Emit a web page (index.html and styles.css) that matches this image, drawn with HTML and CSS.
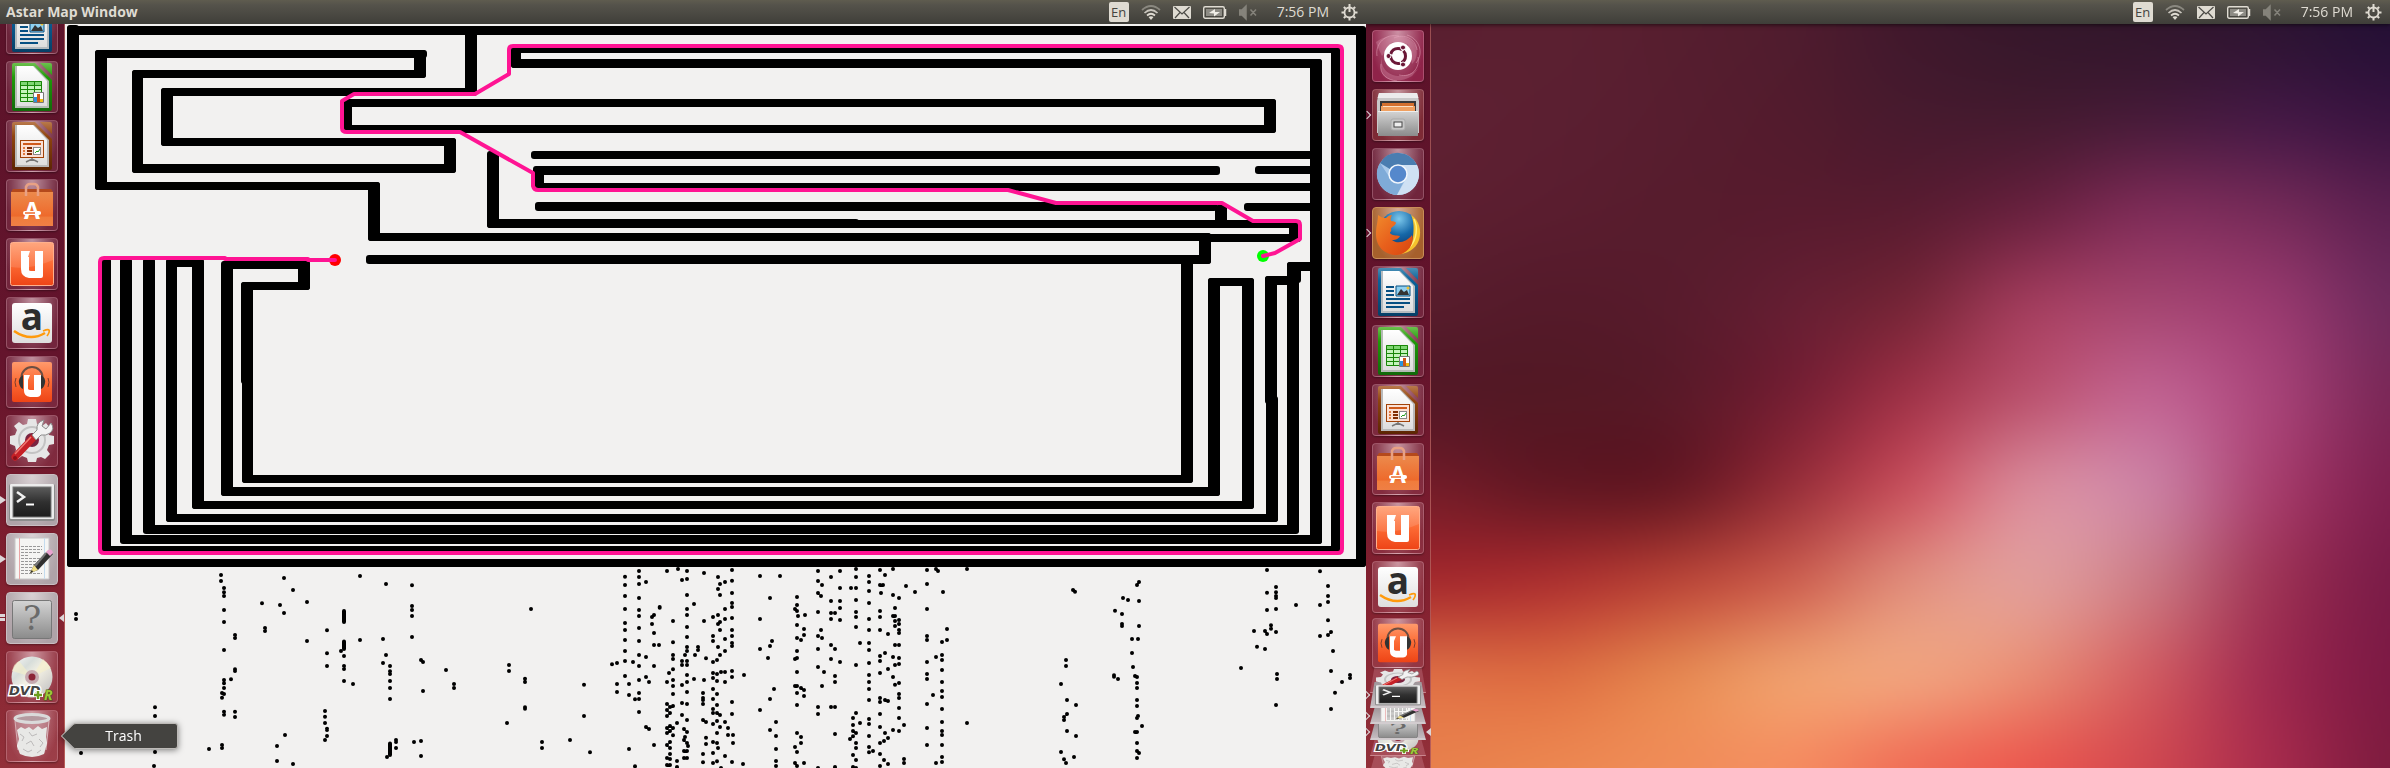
FILE: index.html
```html
<!DOCTYPE html>
<html lang="en">
<head>
<meta charset="utf-8">
<title>Astar Map Window</title>
<link rel="stylesheet" href="styles.css">
</head>
<body>
<svg class="defs" width="0" height="0" aria-hidden="true">
  <defs>
    <linearGradient id="paper" x1="0" y1="0" x2="0" y2="1"><stop offset="0" stop-color="#fff"/><stop offset="1" stop-color="#dedede"/></linearGradient>
    <linearGradient id="blue" x1="0" y1="0" x2="0" y2="1"><stop offset="0" stop-color="#4a8fb5"/><stop offset=".25" stop-color="#0b639c"/><stop offset="1" stop-color="#063f66"/></linearGradient>
    <linearGradient id="green" x1="0" y1="0" x2="0" y2="1"><stop offset="0" stop-color="#6cc04d"/><stop offset=".3" stop-color="#1f9a08"/><stop offset="1" stop-color="#11690a"/></linearGradient>
    <linearGradient id="brown" x1="0" y1="0" x2="0" y2="1"><stop offset="0" stop-color="#b9794b"/><stop offset=".3" stop-color="#8f4410"/><stop offset="1" stop-color="#5c2503"/></linearGradient>
    <linearGradient id="orange" x1="0" y1="0" x2="0" y2="1"><stop offset="0" stop-color="#ff9a6c"/><stop offset=".5" stop-color="#fc6a34"/><stop offset="1" stop-color="#ee4416"/></linearGradient>
    <linearGradient id="bag" x1="0" y1="0" x2="0" y2="1"><stop offset="0" stop-color="#ec8a4c"/><stop offset=".7" stop-color="#ee6a2c"/><stop offset=".75" stop-color="#f07c3c"/><stop offset="1" stop-color="#ef7f45"/></linearGradient>
    <linearGradient id="steel" x1="0" y1="0" x2="0" y2="1"><stop offset="0" stop-color="#d4d4d4"/><stop offset="1" stop-color="#8b8b8b"/></linearGradient>
    <linearGradient id="screenglass" x1="0" y1="0" x2="0" y2="1"><stop offset="0" stop-color="#5c5c5c"/><stop offset=".5" stop-color="#303030"/><stop offset="1" stop-color="#1c1c1c"/></linearGradient>
    <linearGradient id="disc" x1="0" y1="0" x2="1" y2="1"><stop offset="0" stop-color="#f8f8f8"/><stop offset=".3" stop-color="#d7ddda"/><stop offset=".5" stop-color="#f4f1e4"/><stop offset="1" stop-color="#b9b9bd"/></linearGradient>
    <radialGradient id="globe" cx=".5" cy=".2" r=".8"><stop offset="0" stop-color="#7cc8ec"/><stop offset=".5" stop-color="#1668a8"/><stop offset="1" stop-color="#0c2f66"/></radialGradient>
    <linearGradient id="fox" x1="0" y1="0" x2="1" y2="1"><stop offset="0" stop-color="#f08a2c"/><stop offset=".5" stop-color="#e8601c"/><stop offset="1" stop-color="#d8450e"/></linearGradient>
  </defs>

  <symbol id="i-dash" viewBox="0 0 52 52">
    <g fill="none" stroke="#e8a8bd" stroke-opacity=".5">
      <path d="M5 26C3 13 14 3 27 6M45 20C44 9 32 3 22 8M44 33C53 22 46 8 35 5M27 45C40 48 48 38 46 27M9 34C7 45 16 50 25 51"/>
    </g>
    <path d="M4 12C14 4 36 2 44 16 46 26 44 30 40 34L36 14 20 12 10 26C7 20 5 16 4 12zM10 26C8 38 16 46 28 46 38 46 46 40 50 34L40 46C30 52 18 52 12 46 8 40 8 34 10 26z" fill="#e6a3b9" opacity=".3"/>
    <circle cx="26" cy="26" r="14" fill="#fff"/>
    <circle cx="26" cy="26" r="7.500" fill="none" stroke="#6b1837" stroke-width="3" stroke-dasharray="14 1.700" stroke-dashoffset="6"/>
    <g fill="#6b1837" stroke="#fff" stroke-width="1"><circle cx="16.500" cy="26" r="2.500"/><circle cx="31" cy="17.500" r="2.500"/><circle cx="31" cy="34.500" r="2.500"/></g>
  </symbol>

  <symbol id="i-files" viewBox="0 0 52 52">
    <path d="M7 4H45L47 12V44H5V12z" fill="#c9c9c9"/><path d="M7 4H45L46.500 9H5.500z" fill="#ececec"/>
    <path d="M8 12H44V23H8z" fill="#383838"/><path d="M10 14H42V22H10z" fill="#d4702e"/><path d="M9 17H43V22H9z" fill="#f0a060"/><path d="M11 17.500H41" stroke="#fbe0c4"/>
    <path d="M6 22H46V47H6z" fill="url(#steel)"/><path d="M6 22.500H46" stroke="#eee"/>
    <rect x="19" y="30" width="14" height="11" rx="2" fill="#c7c7c7" stroke="#aaa"/><rect x="22" y="33" width="8" height="5" fill="#eee" stroke="#444"/>
  </symbol>

  <symbol id="i-chromium" viewBox="0 0 52 52">
    <circle cx="26" cy="26" r="21" fill="#a9c9ea"/>
    <path d="M26 26L8 15A21 21 0 0 1 45 17z" fill="#4a7db0"/>
    <path d="M8 15A21 21 0 0 0 25 47L33 31 18 30z" fill="#7fabd8"/>
    <path d="M45 17H27L34 31 25 47A21 21 0 0 0 45 17z" fill="#cfe1f4"/>
    <circle cx="26" cy="26" r="9" fill="#5588cc" stroke="#f1f6fc" stroke-width="1.500"/>
  </symbol>

  <symbol id="i-firefox" viewBox="0 0 52 52">
    <circle cx="27" cy="24" r="20" fill="url(#globe)"/>
    <path d="M39 8C47 13 50 23 47 33 43 44 32 48 24 47 34 45 40 38 41 30 42 22 42 14 39 8z" fill="#f6c22c"/>
    <path d="M42 12C46 20 45 32 38 40" fill="none" stroke="#fff07a" stroke-width="1.500"/>
    <path d="M6 8C9 10 10 11 14 11 16 9 18 8 20 8 19 10 18 12 19 14 22 14 24 15 24 16 23 19 19 20 19 22 20 24 18 25 18 26 20 29 24 28 28 29 26 33 22 33 20 33 26 38 36 34 40 28 43 36 36 47 25 48 13 48 4 40 4 27 4 19 6 15 6 8z" fill="url(#fox)"/>
  </symbol>

  <symbol id="i-writer" viewBox="0 0 52 52">
    <path d="M8 2H29L46 19V48Q46 50 44 50H8Q6 50 6 48V4Q6 2 8 2zM34 2H44Q46 2 46 4V14z" fill="url(#blue)"/>
    <path d="M9 5H28L43 20V47H9z" fill="#b5bbbf"/><path d="M9 5H27L41 20V45H11V5z" fill="url(#paper)"/>
    <path d="M14 21h8M14 25h8M14 29h8M14 33h24M14 37h24M14 41h18" stroke="#075083" stroke-width="2"/>
    <path d="M24 20H38V30H24z" fill="#8fd0f0" stroke="#075083"/><path d="M25 29L29 23 32 26 35 24 37 29z" fill="#333"/><circle cx="36" cy="22" r="1.500" fill="#f0c030"/>
  </symbol>

  <symbol id="i-calc" viewBox="0 0 52 52">
    <path d="M8 2H29L46 19V48Q46 50 44 50H8Q6 50 6 48V4Q6 2 8 2zM34 2H44Q46 2 46 4V14z" fill="url(#green)"/>
    <path d="M9 5H28L43 20V47H9z" fill="#b5bbb5"/><path d="M9 5H27L41 20V45H11V5z" fill="url(#paper)"/>
    <path d="M14 20H36V41H14z" fill="#c5f3bc"/><path d="M14 20H36V24H14z" fill="#7fd673"/>
    <path d="M14.500 20.500H35.500V40.500H14.500zM14 24.500H36M14 28.500H36M14 32.500H36M14 36.500H36M21.500 20V41M28.500 20V41" fill="none" stroke="#188508"/>
    <path d="M27.500 31.500H37.500V41.500H27.500z" fill="#fff" stroke="#777"/><path d="M28 36h3v5h-3z" fill="#2b94dc"/><path d="M31 33h3v8h-3z" fill="#cf5818"/><path d="M34 38h3v3h-3z" fill="#eebc10"/>
  </symbol>

  <symbol id="i-impress" viewBox="0 0 52 52">
    <path d="M8 2H29L46 19V48Q46 50 44 50H8Q6 50 6 48V4Q6 2 8 2zM34 2H44Q46 2 46 4V14z" fill="url(#brown)"/>
    <path d="M9 5H28L43 20V47H9z" fill="#b9b9b9"/><path d="M9 5H27L41 20V45H11V5z" fill="url(#paper)"/>
    <path d="M26 38V41M20 42L26 39 32 42" fill="none" stroke="#777" stroke-width="1.500"/>
    <rect x="14.500" y="20.500" width="23" height="17" fill="#fbe0d4" stroke="#a14208"/>
    <path d="M17 24H35" stroke="#cf5a1b" stroke-width="2"/><path d="M17 28h2M17 31h2M17 34h2" stroke="#e07a40" stroke-width="2"/><path d="M21 28h5M21 31h5M21 34h5" stroke="#802c04" stroke-width="2"/>
    <rect x="27.500" y="27.500" width="7" height="7" fill="#fff" stroke="#888"/><path d="M29 33l2-2 1 1 2-3" fill="none" stroke="#27a020"/>
  </symbol>

  <symbol id="i-software" viewBox="0 0 52 52">
    <path d="M5 13L7 10H45L47 13z" fill="#b4491c"/><path d="M5 13H47V47H5z" fill="url(#bag)"/>
    <path d="M20 17V8Q21 5 24 5H28Q31 5 32 8V17" fill="none" stroke="#e8a184" stroke-width="2.500"/>
    <text x="26" y="40" class="glyph-a">A</text>
    <rect x="17" y="32" width="18" height="4" rx="2" fill="#fff"/><path d="M19 34H29" stroke="#ee6a2c" stroke-width="1.500"/>
  </symbol>

  <symbol id="i-one" viewBox="0 0 52 52">
    <rect x="4.500" y="4.500" width="43" height="43" rx="2" fill="url(#orange)" stroke="#ffb08c"/>
    <path d="M5 5H47V22Q24 32 5 29z" fill="#fff" opacity=".13"/>
    <path d="M15 13H21L24 13 22 19H23V32Q23 33 25 33H29V13H37V38Q37 40 35 40H23Q15 39 15 31z" fill="#fff"/>
  </symbol>

  <symbol id="i-amazon" viewBox="0 0 52 52">
    <rect x="6" y="6" width="40" height="40" rx="3" fill="url(#paper)"/>
    <text x="26" y="33" class="glyph-amazon">a</text>
    <path d="M8 34Q24 45 39 36" fill="none" stroke="#ff9a0c" stroke-width="2.500"/><path d="M37 34Q42 32 43 33 44 35 41 39" fill="none" stroke="#ff9a0c" stroke-width="1.700"/>
  </symbol>

  <symbol id="i-music" viewBox="0 0 52 52">
    <rect x="6" y="6" width="40" height="40" rx="2" fill="url(#orange)"/>
    <path d="M15.500 24V21A10.500 10 0 0 1 36.500 21V24" fill="none" stroke="#6d4e42" stroke-width="2"/>
    <path d="M17 19Q12 22 13 27 14 32 17 33zM35 19Q40 22 39 27 38 32 35 33z" fill="#333"/>
    <path d="M10 22Q8 26 10 31M42 22Q44 26 42 31" fill="none" stroke="#7a3c2c"/>
    <path d="M18 19H24L22 24V33Q23 34 24 34H28V19H35V38Q34 41 31 41H24Q18 40 18 35z" fill="#fff"/>
  </symbol>

  <symbol id="i-settings" viewBox="0 0 52 52">
    <path d="M21 9L22 4H30L31 9L36 11 40 8 44 13 42 17 43 20 48 21V29L43 30 41 35 44 39 39 44 35 42 31 43 30 47H22L21 43 16 41 12 44 8 39 10 35 9 31 4 29V21L9 20 11 15 8 11 13 7 17 10z" fill="#e6e6e6"/>
    <circle cx="26" cy="25" r="13" fill="none" stroke="#c3c3c3" stroke-width="2"/><circle cx="26" cy="25" r="7" fill="#7a2440"/>
    <path d="M9 42L27 23" stroke="#c62026" stroke-width="7" stroke-linecap="round"/><path d="M9 39L25 22" stroke="#ee7a72" stroke-width="1.500"/>
    <path d="M26 20L31 15Q30 7 38 5L36 11 40 14 45 8Q49 14 44 18 40 21 35 20L30 25z" fill="#f2f2f2" stroke="#8e8e8e"/>
    <circle cx="9" cy="43" r="2" fill="#8d1018"/>
  </symbol>

  <symbol id="i-terminal" viewBox="0 0 52 52">
    <rect x="3" y="10" width="46" height="37" rx="2" fill="#8c8c8c"/><rect x="4" y="10" width="44" height="35" rx="1" fill="#ececec"/>
    <rect x="7" y="13" width="38" height="30" fill="url(#screenglass)" stroke="#777"/>
    <path d="M11 18L18 23 11 28" fill="none" stroke="#f1f1f1" stroke-width="2.500"/><path d="M20 30.500H28" stroke="#fff" stroke-width="2"/>
  </symbol>

  <symbol id="i-editor" viewBox="0 0 52 52">
    <path d="M9 5H43V46H9z" fill="#f5f5f3" stroke="#c6c6c6"/><path d="M13.500 5V46" stroke="#e9a5a5"/><path d="M38.500 5V46" stroke="#c4dcee"/>
    <path d="M15 13.500H36M15 16.500H36M15 19.500H34M15 22.500H22M15 25.500H36M15 28.500H33M15 31.500H36M15 34.500H30M15 37.500H26M15 40.500H36" stroke="#999" stroke-dasharray="3 1"/>
    <path d="M43 17L47 21 32 37 24 40 28 32z" fill="#2f2f2f"/><path d="M40 20L29 33" stroke="#777" stroke-width="2"/>
    <path d="M42 17Q46 15 47 20L44 23 40 19z" fill="#eaa3d0"/><path d="M28 32L32 37 24 40z" fill="#f0de86"/><path d="M26 37L24 40 27 39z" fill="#222"/>
  </symbol>

  <symbol id="i-unknown" viewBox="0 0 52 52">
    <rect x="6.500" y="8.500" width="39" height="38" rx="2" fill="url(#steel)" stroke="#777"/>
    <text x="26" y="38" class="glyph-unknown">?</text>
  </symbol>

  <symbol id="i-dvd" viewBox="0 0 52 52">
    <circle cx="26" cy="26" r="20.500" fill="url(#disc)"/>
    <path d="M26 26L6 20Q8 12 13 10zM26 26L37 8Q42 12 45 17z" fill="#f6f0c8" opacity=".6"/>
    <circle cx="26" cy="26" r="7" fill="#c6a9b0"/><circle cx="26" cy="26" r="3.500" fill="#8c2437"/>
    <text x="3" y="44" class="glyph-dvd">DVD</text><text x="38" y="49" class="glyph-r">R</text>
    <path d="M32 39V49M27 44H37" stroke="#fff" stroke-width="4"/><path d="M32 40V48M28 44H36" stroke="#6b9c1c" stroke-width="2.500"/>
  </symbol>

  <symbol id="i-trash" viewBox="0 0 52 52">
    <path d="M9 9L13 43Q26 50 39 43L44 9z" fill="#c9a3aa" opacity=".4"/>
    <path d="M11 20L15 17 19 19 23 17 27 20 32 16 36 19 41 17 40 27 41 33 38 44Q26 50 14 44L11 36 13 29z" fill="#e8e8e6"/>
    <path d="M14 24L18 27 16 31M23 22L26 26 31 24M20 34L25 31 28 36M33 29L37 33 34 37M17 39L22 42 26 40M31 43L35 40" fill="none" stroke="#bcbaba"/>
    <ellipse cx="26" cy="8.500" rx="17" ry="4" fill="#b59aa0" stroke="#dadada" stroke-width="3"/>
    <path d="M9 11L12 40M43 11L40 40" stroke="#fff" stroke-opacity=".5"/>
  </symbol>

  <symbol id="p-wifi" viewBox="0 0 20 20">
    <g fill="none" stroke="#dfdbd2" stroke-width="1.700"><path d="M1 8Q10 0 19 8" opacity=".4"/><path d="M3.500 11Q10 5 16.500 11" opacity=".85"/><path d="M6 13.500Q10 10 14 13.500"/></g><path d="M10 18L7.500 15Q10 13.500 12.500 15z" fill="#dfdbd2"/>
  </symbol>
  <symbol id="p-mail" viewBox="0 0 18 20"><rect y="4" width="18" height="13" rx="1" fill="#dfdbd2"/><path d="M1.500 5L9 12 16.500 5M2 16L7 10.500M16 16L11 10.500" fill="none" stroke="#4c4b46" stroke-width="1.200"/></symbol>
  <symbol id="p-battery" viewBox="0 0 24 20"><rect x=".7" y="4.700" width="20.600" height="11.600" rx="1.500" fill="none" stroke="#dfdbd2" stroke-width="1.400"/><rect x="3" y="7" width="16" height="7" fill="#8d8b84"/><path d="M22.500 7V14" stroke="#dfdbd2" stroke-width="1.500"/><path d="M6 11L12 7 12 10 17 10 11 14.500 11 11.500z" fill="#f0ede6"/></symbol>
  <symbol id="p-sound" viewBox="0 0 20 20"><path d="M0 8H3L7 4V17L3 13H0zM11.500 7.500L17 13.500M17 7.500L11.500 13.500" fill="#85837b" stroke="#85837b" stroke-width="1.500"/></symbol>
  <symbol id="p-gear" viewBox="0 0 17 20"><circle cx="8.500" cy="10.500" r="5" fill="none" stroke="#dfdbd2" stroke-width="1.800"/><path d="M8.500 2V10M8.500 16V18.500M.5 10.500H3M14 10.500H16.500M2.800 5L4.500 6.600M14.200 5L12.500 6.600M2.800 16L4.500 14.400M14.200 16L12.500 14.400" stroke="#dfdbd2" stroke-width="2"/></symbol>
</svg>

<div class="desktop">
  <section class="screen screen-left">
    <header class="panel">
      <h1 class="title">Astar Map Window</h1>
      <div class="indicators">
        <button class="lang">En</button>
        <button class="ind" aria-label="Network"><svg width="20" height="20"><use href="#p-wifi"/></svg></button>
        <button class="ind" aria-label="Messages"><svg width="18" height="20"><use href="#p-mail"/></svg></button>
        <button class="ind" aria-label="Battery"><svg width="24" height="20"><use href="#p-battery"/></svg></button>
        <button class="ind" aria-label="Sound"><svg width="20" height="20"><use href="#p-sound"/></svg></button>
        <button class="clock">7:56 PM</button>
        <button class="ind" aria-label="System"><svg width="17" height="20"><use href="#p-gear"/></svg></button>
      </div>
    </header>
    <div class="workspace">
      <nav class="launcher launcher-end" aria-label="Launcher">
        <button class="tile" aria-label="Writer"><svg><use href="#i-writer"/></svg></button>
        <button class="tile" aria-label="Calc"><svg><use href="#i-calc"/></svg></button>
        <button class="tile" aria-label="Impress"><svg><use href="#i-impress"/></svg></button>
        <button class="tile" aria-label="Software Center"><svg><use href="#i-software"/></svg></button>
        <button class="tile" aria-label="Ubuntu One"><svg><use href="#i-one"/></svg></button>
        <button class="tile" aria-label="Amazon"><svg><use href="#i-amazon"/></svg></button>
        <button class="tile" aria-label="Ubuntu One Music"><svg><use href="#i-music"/></svg></button>
        <button class="tile" aria-label="System Settings"><svg><use href="#i-settings"/></svg></button>
        <button class="tile tile-open running" aria-label="Terminal"><svg><use href="#i-terminal"/></svg></button>
        <button class="tile tile-open running" aria-label="Text Editor"><svg><use href="#i-editor"/></svg></button>
        <button class="tile tile-open double active" aria-label="Astar"><svg><use href="#i-unknown"/></svg></button>
        <button class="tile" aria-label="DVD"><svg><use href="#i-dvd"/></svg></button>
        <button class="tile" aria-label="Trash"><svg><use href="#i-trash"/></svg>
          <span class="tooltip"><svg class="tooltip-shape" viewBox="0 0 116 26" preserveAspectRatio="none" aria-hidden="true"><path d="M.5 13L12 1.500Q13 .5 15 .5H113Q115.500 .5 115.500 3V23Q115.500 25.500 113 25.500H15Q13 25.500 12 24.500z"/></svg><span class="tooltip-text">Trash</span></span>
        </button>
      </nav>
      <main class="map">
        <svg class="map-svg" viewBox="65 24 1301 744" preserveAspectRatio="xMinYMin meet" role="img" aria-label="A star path map">
          <g id="walls"></g>
          <path id="dots" class="dots"/>
          <path class="bars" d="M344 611V622M344 641.500V649M390 743.500V755"/>
          <circle cx="335" cy="260" r="6" fill="#f00"/><circle cx="1263" cy="256" r="6" fill="#0f0"/>
          <path class="route" d="M335 260H308V259H225V258H104Q100 258 100 262V549Q100 553 104 553H1338Q1342 553 1342 549V50Q1342 46 1338 46H513Q509 46 509 50V74L475 94H354L342 101V128Q342 132 347 132H460L533 173V186Q534 190 538 190H1008L1056 203H1222L1253 221H1296Q1300 221 1300 225V239L1275 253 1263 256"/>
        </svg>
      </main>
    </div>
  </section>

  <section class="screen screen-right">
    <header class="panel">
      <div class="indicators">
        <button class="lang">En</button>
        <button class="ind" aria-label="Network"><svg width="20" height="20"><use href="#p-wifi"/></svg></button>
        <button class="ind" aria-label="Messages"><svg width="18" height="20"><use href="#p-mail"/></svg></button>
        <button class="ind" aria-label="Battery"><svg width="24" height="20"><use href="#p-battery"/></svg></button>
        <button class="ind" aria-label="Sound"><svg width="20" height="20"><use href="#p-sound"/></svg></button>
        <button class="clock">7:56 PM</button>
        <button class="ind" aria-label="System"><svg width="17" height="20"><use href="#p-gear"/></svg></button>
      </div>
    </header>
    <div class="workspace">
      <nav class="launcher" aria-label="Launcher">
        <button class="tile tile-dash" aria-label="Dash"><svg><use href="#i-dash"/></svg></button>
        <button class="tile tile-files elsewhere" aria-label="Files"><svg><use href="#i-files"/></svg></button>
        <button class="tile" aria-label="Chromium"><svg><use href="#i-chromium"/></svg></button>
        <button class="tile tile-firefox elsewhere" aria-label="Firefox"><svg><use href="#i-firefox"/></svg></button>
        <button class="tile" aria-label="Writer"><svg><use href="#i-writer"/></svg></button>
        <button class="tile" aria-label="Calc"><svg><use href="#i-calc"/></svg></button>
        <button class="tile" aria-label="Impress"><svg><use href="#i-impress"/></svg></button>
        <button class="tile" aria-label="Software Center"><svg><use href="#i-software"/></svg></button>
        <button class="tile" aria-label="Ubuntu One"><svg><use href="#i-one"/></svg></button>
        <button class="tile" aria-label="Amazon"><svg><use href="#i-amazon"/></svg></button>
        <button class="tile tile-short" aria-label="Ubuntu One Music"><svg viewBox="0 0 52 52" preserveAspectRatio="none"><use href="#i-music" width="52" height="52"/></svg></button>
        <div class="stack">
          <button class="fold fold-tall" aria-label="System Settings"><span class="leaf"></span><svg viewBox="0 0 52 52" preserveAspectRatio="none"><use href="#i-settings" width="52" height="52"/></svg></button>
          <button class="fold fold-tall overlap elsewhere" aria-label="Terminal"><span class="leaf leaf-open"></span><svg viewBox="0 4 52 48" preserveAspectRatio="none"><use href="#i-terminal" width="52" height="52"/></svg></button>
          <button class="fold elsewhere" aria-label="Text Editor"><span class="leaf leaf-open"></span><svg viewBox="0 14 52 38" preserveAspectRatio="none"><use href="#i-editor" width="52" height="52"/></svg></button>
          <button class="fold elsewhere active" aria-label="Astar"><span class="leaf leaf-open"></span><svg viewBox="0 16 52 36" preserveAspectRatio="none"><use href="#i-unknown" width="52" height="52"/></svg></button>
          <button class="fold" aria-label="DVD"><span class="leaf"></span><svg viewBox="0 28 52 24" preserveAspectRatio="none"><use href="#i-dvd" width="52" height="52"/></svg></button>
          <button class="fold" aria-label="Trash"><span class="leaf"></span><svg viewBox="0 14 52 38" preserveAspectRatio="none"><use href="#i-trash" width="52" height="52"/></svg></button>
        </div>
      </nav>
      <main class="wallpaper"><canvas id="wallpaper" class="wallpaper-canvas" width="480" height="372" aria-hidden="true"></canvas></main>
    </div>
  </section>
</div>
<script src="script.js"></script>
</body>
</html>
```

FILE: styles.css
```css
* { box-sizing: border-box; }
body { margin: 0; overflow: hidden; background: #5a1f30; font-family: "Open Sans", "Noto Sans", sans-serif; font-size: 14px; }
button { margin: 0; padding: 0; border: 0; background: none; color: inherit; font: inherit; }
.defs { position: absolute; }
.desktop { display: grid; grid-template-columns: 1366fr 1024fr; height: 100vh; }
.screen { display: flex; flex-direction: column; min-width: 0; min-height: 0; overflow: hidden; }

.panel { display: flex; align-items: center; flex: none; height: 24px; padding: 0 8px 0 6px; background: linear-gradient(#5f5c4f, #55534b 20%, #3f3e39); color: #dfdbd2; z-index: 10; }
.screen-right .panel { box-shadow: 0 1px 4px rgba(0, 0, 0, .6); }
.title { margin: 0; font-size: 14px; line-height: 24px; font-weight: 700; }
.indicators { display: flex; align-items: center; gap: 12px; margin-left: auto; }
.ind svg { display: block; }
.lang { width: 20px; height: 20px; border-radius: 2px; background: #dfdbd2; color: #45443f; font-size: 13px; line-height: 20px; }
.clock { margin-left: 6px; line-height: 24px; }

.workspace { display: flex; flex: 1; min-height: 0; }
.launcher { display: flex; flex: none; flex-direction: column; gap: 7px; width: 65px; min-height: 0; padding: 6px; background: linear-gradient(#5c132a, #64142c 45%, #82202f 75%, #923039); border-right: 1px solid rgba(230, 150, 130, .45); z-index: 5; }
.launcher-end { justify-content: flex-end; }
.tile { position: relative; flex: none; width: 52px; height: 52px; border-radius: 4px; border: 1px solid rgba(255, 210, 225, .25); background: radial-gradient(ellipse at 50% 0, rgba(255, 235, 240, .55), rgba(255, 235, 240, .12) 60%, transparent 80%), rgba(255, 200, 215, .1); box-shadow: 0 1px 2px rgba(0, 0, 0, .35); }
.tile > svg { display: block; width: 52px; height: 52px; margin: -1px; }
.tile-short, .tile-short > svg { height: 50px; }
.tile-short { margin-top: -2px; }
.tile-open { background: radial-gradient(ellipse at 50% 0, #d9d1d4, #afa3a8 80%); border-color: #c9bec2; }
.tile-dash { background-color: #8f2349; }
.tile-files { background-color: #7d2a35; }
.tile-firefox { background-color: #a6602c; border-color: #c98e58; }

.running::before, .double::before, .elsewhere::before, .active::after { content: ""; position: absolute; background: #ddd6d8; top: 50%; }
.running::before { left: -7px; width: 6px; height: 8px; margin-top: -4px; clip-path: polygon(0 0, 100% 50%, 0 100%); }
.double::before { left: -7px; width: 5px; height: 7px; margin-top: -4px; background: linear-gradient(#ddd6d8 3px, transparent 3px, transparent 4px, #ddd6d8 4px); }
.elsewhere::before { left: -9px; width: 5px; height: 5px; margin-top: -3px; background: none; border: solid #ddd6d8; border-width: 1px 1px 0 0; transform: rotate(45deg); }
.active::after { right: -7px; width: 5px; height: 8px; margin-top: -4px; clip-path: polygon(0 50%, 100% 0, 100% 100%); }

.stack { display: flex; flex-direction: column; margin: -8px -2px 0; }
.fold { position: relative; display: grid; grid-template-rows: 100%; flex: none; height: 16px; }
.fold-tall { height: 26px; }
.overlap { margin-top: -11px; }
.fold.elsewhere::before { left: -7px; }
.fold.active::after { right: -5px; }
.leaf { grid-area: 1 / 1; clip-path: polygon(8% 0, 92% 0, 100% 100%, 0 100%); background: rgba(255, 200, 215, .2); border-bottom: 1px solid rgba(255, 220, 225, .4); }
.leaf-open { background: linear-gradient(#a0979b, #c4bcc0); border-bottom: 2px solid #d2cccf; }
.fold svg { grid-area: 1 / 1; justify-self: center; width: 52px; height: 100%; min-height: 0; z-index: 1; }

.tooltip { position: absolute; left: 54px; top: 12px; display: grid; width: 117px; height: 26px; color: #fff; filter: drop-shadow(0 1px 3px rgba(0, 0, 0, .5)); }
.tooltip-shape { grid-area: 1 / 1; width: 100%; height: 100%; fill: #444340; stroke: #bdbab7; }
.tooltip-text { grid-area: 1 / 1; padding-left: 8px; line-height: 26px; text-align: center; z-index: 1; }

.map { flex: 1; min-width: 0; background: #f2f1f0; }
.map-svg { display: block; width: 100%; height: auto; }
.dots { fill: none; stroke: #000; stroke-width: 4; stroke-linecap: round; }
.bars { fill: none; stroke: #000; stroke-width: 4; stroke-linecap: round; }
.route { fill: none; stroke: #ff1493; stroke-width: 4; stroke-linecap: round; stroke-linejoin: round; }

.wallpaper { flex: 1; min-width: 0; }
.wallpaper-canvas { display: block; width: 100%; height: 100%; }

.glyph-a { font: 700 23px "Open Sans", sans-serif; fill: #fff; text-anchor: middle; }
.glyph-amazon { font: 700 37px "Open Sans", sans-serif; fill: #2d2d2d; text-anchor: middle; }
.glyph-unknown { font: 34px "DejaVu Serif", serif; fill: #6a6a6a; text-anchor: middle; }
.glyph-dvd { font: italic 700 13px "DejaVu Sans", sans-serif; fill: #444; stroke: #fff; stroke-width: 3px; paint-order: stroke; }
.glyph-r { font: italic 700 14px "Open Sans", sans-serif; fill: #9cc83a; stroke: #3f5c10; stroke-width: 1px; paint-order: stroke; }
```

FILE: script.js
```js
const NS = "http://www.w3.org/2000/svg";

// Wall segments: left, top, right, bottom.
const walls = [
  [67,26,1366,35],[67,25,79,567],[67,559,1366,567],[1356,27,1366,567],[465,30,477,94],
  [95,50,107,190],[95,50,427,58],[414,50,426,78],[132,70,426,78],[132,70,143,173],[132,164,456,173],
  [444,138,456,173],[161,138,456,146],[161,88,173,146],[161,88,477,96],[95,182,380,190],[368,182,380,241],
  [368,233,1211,241],[1199,233,1211,264],[1205,234,1300,242],[1289,220,1301,242],[487,219,859,228],
  [850,220,1300,228],[487,151,499,228],[366,255,1211,264],
  [343,99,352,133],[343,99,1276,107],[343,125,1276,133],[1264,99,1276,133],
  [509,45,1340,53],[511,45,521,68],[511,59,1322,68],[1310,59,1322,544],[1331,45,1341,552],
  [531,151,1314,159],[533,166,1220,175],[1255,166,1314,174],[535,166,544,191],[535,183,1314,191],
  [535,202,1217,211],[1215,205,1227,224],[1244,203,1314,211],
  [101,258,111,552],[101,546,1341,552],[120,258,132,543],[120,535,1322,544],[143,258,155,533],[143,525,1299,534],
  [166,259,177,522],[166,514,1278,522],[166,259,204,267],[192,259,204,509],[192,501,1254,509],
  [221,261,233,496],[221,487,1220,496],[222,261,310,269],[298,261,310,290],[241,282,310,290],
  [241,282,253,384],[242,376,253,483],[242,475,1193,483],[1181,260,1193,483],
  [1208,278,1220,496],[1208,278,1254,286],[1242,278,1254,509],[1265,276,1277,404],[1266,396,1278,522],
  [1265,276,1298,285],[1287,263,1299,533],[1287,262,1314,271],[1287,262,1301,283]
];
const wallGroup = document.getElementById("walls");
for (const [x1, y1, x2, y2] of walls) {
  const r = document.createElementNS(NS, "rect");
  r.setAttribute("x", x1);
  r.setAttribute("y", y1);
  r.setAttribute("width", x2 - x1);
  r.setAttribute("height", y2 - y1);
  r.setAttribute("rx", 3);
  wallGroup.appendChild(r);
}

// Scan points in third-pixel units, grouped by column: "x:y,y,y".
const scans = [
  [60, "48:162,177;483:45,63;492:84,97,108,150,186,270,360,370,384,402,455,464;486:399,413,555,564;525:225,234,328,333,455,471;513:358;606:130;615:204,213;672:54,159;660:135;699:90,612;741:126,243;801:211,280,318,506,510,528;795:453,470,489,540;852:288,318,327,363;843:273;879:372;900:48,240;978:72,285;969:237,309;1056:76,138,150,168,231;990:318,334,342,363,384,417;981:591;1008:540,546,564;1062:546;1083:300,543,588;1089:306,393;1158:330;1182:372,384;285:442,468,576;282:618;63:579;447:567;675:525;651:558,603"],
  [500, "375:50,75,108,147,189,210,240,273,303,348;417:33,51,72,114,150,168,204,243,285,318,360,399,417,456;438:66,291,351,501;462:165,219,255,318,555;456:171,192;479:141,143;477:255;447:366,507;399:306;336:313;351:309,372,396;387:372,405,567;405:418,619;93:147;27:315,333;75:356,366,442,446;21:489;126:546,564;210:540;252:374,468;270:577"],
  [500, "501:33,366,432,450,468,504,519,555,594,615;510:441,459,498,513,546,564,582,597,615;519:183,247,285,297,328,360,378,402,438,504,526;507:339;534:27;531:489,603,621;546:60,303,315,375,429,465;561:33,57,105,147,165,201,231,261,273,303,315,345,366,396,432,480,516,549,573,594;555:285,531;552:507,540,573,594;564:558;582:132,357;585:285;594:261,270;612:39,183,360;618:295,486,533,552;609:399,414,420,432,480,582,607"],
  [500, "639:171,228,243,306,339,354,387,417,447,459,492,546,579,609;654:51,87,165,192,261,564;660:72,105,186,210,285,465,501;651:300,342,363,402,435,459,483,519,549,604;663:336,624;675:66,147,177,237,273,336,366,486,588;684:504,525;696:30,62,99,129,141,174,210,228,249,258,333,351,426,462,606;699:525,549;732:345;729:612;780:48,177,267,450;840:48;810:114,258,417,510;816:243;804:294;822:387;828:486,528,567,603,618"],
  [500, "891:111,135,153,195,234,273,294,336,378,399,435,519,576,618;885:147,297,378,561,609;894:168;915:165;912:207,225,390,408,609;903:240,384,531,549;954:33,63,99,156,228,267,321,441,462,624;966:75,234,378;963:108,210;972:336;993:51,123,159,177,255,297,441;1005:159,267,348,366,441,522,621;1020:33,84,123,144,180,306;1053:84;1068:27,51,84,120,156,171,201,315,459,519,549,564,600,624;1059:474,495,513,529,585,621;1050:537;1080:249,489"],
  [500, "1107:48,66,93,129,177,210,249,270,309,345,366,387,420,477,492,528,561,577;1119:573;1140:30,75,153,171,210,288,303,339,414,426,462,501,549,582,618;1143:99;1149:75;1155:45,279,420,519;1152:543,600;1164:222,327,423,534,612;1179:27,105,168,291,351,510;1185:144,168,183,198,255,315,374;1197:114,180,192,210,219,255,294,312,369,402,414,444,474,513;1218:78;1245:96;1212:495,597,609;1281:30,72,147,228,240,306,342,357,432,504,555;1308:27,291,609;1314:33;1299:405;1329:96;1341:207,240;1326:246,285,300,330,366,393,411,447,486,513,525,555,591,606"],
  [940, "81:27,489;399:90;405:95;378:300,318,609;363:372,576;381:420,462,513;408:435,528;372:471,480,598;402:591;597:66,123,198,579;591:75,351,369,384,420,438,474,516,549,573,594;549:114;564:120;525:152;546:162,192,198;576:237,279;594:237,468;579:321;585:348,516;606:498;522:346,350;534:357;903:324;942:213;951:260;975:213,267;981:30,98,150,222;993:196,206;1008:81,97,108,114,147,216,435;1011:342,357;1068:135;1140:34,135,228;1164:78,108,126,181,225;1173:216,333,447;1179:273;1185:398;1206:366;1230:345,354"]
];
let d = "";
for (const [origin, text] of scans) {
  for (const column of text.split(";")) {
    const [x, ys] = column.split(":");
    for (const y of ys.split(",")) {
      d += "M" + (origin + x / 3).toFixed(1) + " " + (560 + y / 3).toFixed(1) + "h.01";
    }
  }
}
document.getElementById("dots").setAttribute("d", d);

// Wallpaper: smooth colour mesh, interpolated with Catmull-Rom splines.
const mesh = [
  "5a1f30 5b2031 561e2f 4f1c2e 40182c 36172b 32162c 2e1432 251035",
  "5e2032 5b1f31 571d2f 521b2d 481a2e 451a30 481b3a 451944 3a1440",
  "5c1f30 5a1d2f 571c2d 581b2e 5a1c31 6a2240 7d2c57 742a58 5c2050",
  "571c2c 551a2a 581b2c 651e32 782639 a03c5c a44570 983a6e 702a5c",
  "551826 541824 5a1928 761f33 a03449 bb5470 c0628f a84478 7c2858",
  "741c28 661823 6a1a24 98303a c85460 d88898 cb7fa0 a8406e 802150",
  "a62c2e ac3230 b84538 cc6050 e08c7c e19b98 cb7884 a03658 7c1c48",
  "dc6c44 dc6c42 e48450 ee9c6c f0a07c e88a74 d05c62 a02c50 7e1a44",
  "e8804c ec8650 f08c58 f48c60 f07058 ea5a50 d04850 a82c4c 801c40"
].map(row => row.split(" ").map(c => [0, 2, 4].map(i => parseInt(c.substr(i, 2), 16))));
const clamp = i => Math.max(0, Math.min(8, i));
const spline = (a, b, c, e, t) =>
  b + 0.5 * t * (c - a + t * (2 * a - 5 * b + 4 * c - e + t * (3 * (b - c) + e - a)));
const canvas = document.getElementById("wallpaper");
const ctx = canvas.getContext("2d");
const image = ctx.createImageData(canvas.width, canvas.height);
for (let y = 0, p = 0; y < canvas.height; y++) {
  const v = y / (canvas.height - 1) * 8, j = Math.min(7, Math.floor(v));
  for (let x = 0; x < canvas.width; x++, p += 4) {
    const u = x / (canvas.width - 1) * 8, i = Math.min(7, Math.floor(u));
    for (let k = 0; k < 3; k++) {
      const rows = [-1, 0, 1, 2].map(n => {
        const r = mesh[clamp(j + n)];
        return spline(r[clamp(i - 1)][k], r[i][k], r[clamp(i + 1)][k], r[clamp(i + 2)][k], u - i);
      });
      image.data[p + k] = spline(...rows, v - j);
    }
    image.data[p + 3] = 255;
  }
}
ctx.putImageData(image, 0, 0);
```
